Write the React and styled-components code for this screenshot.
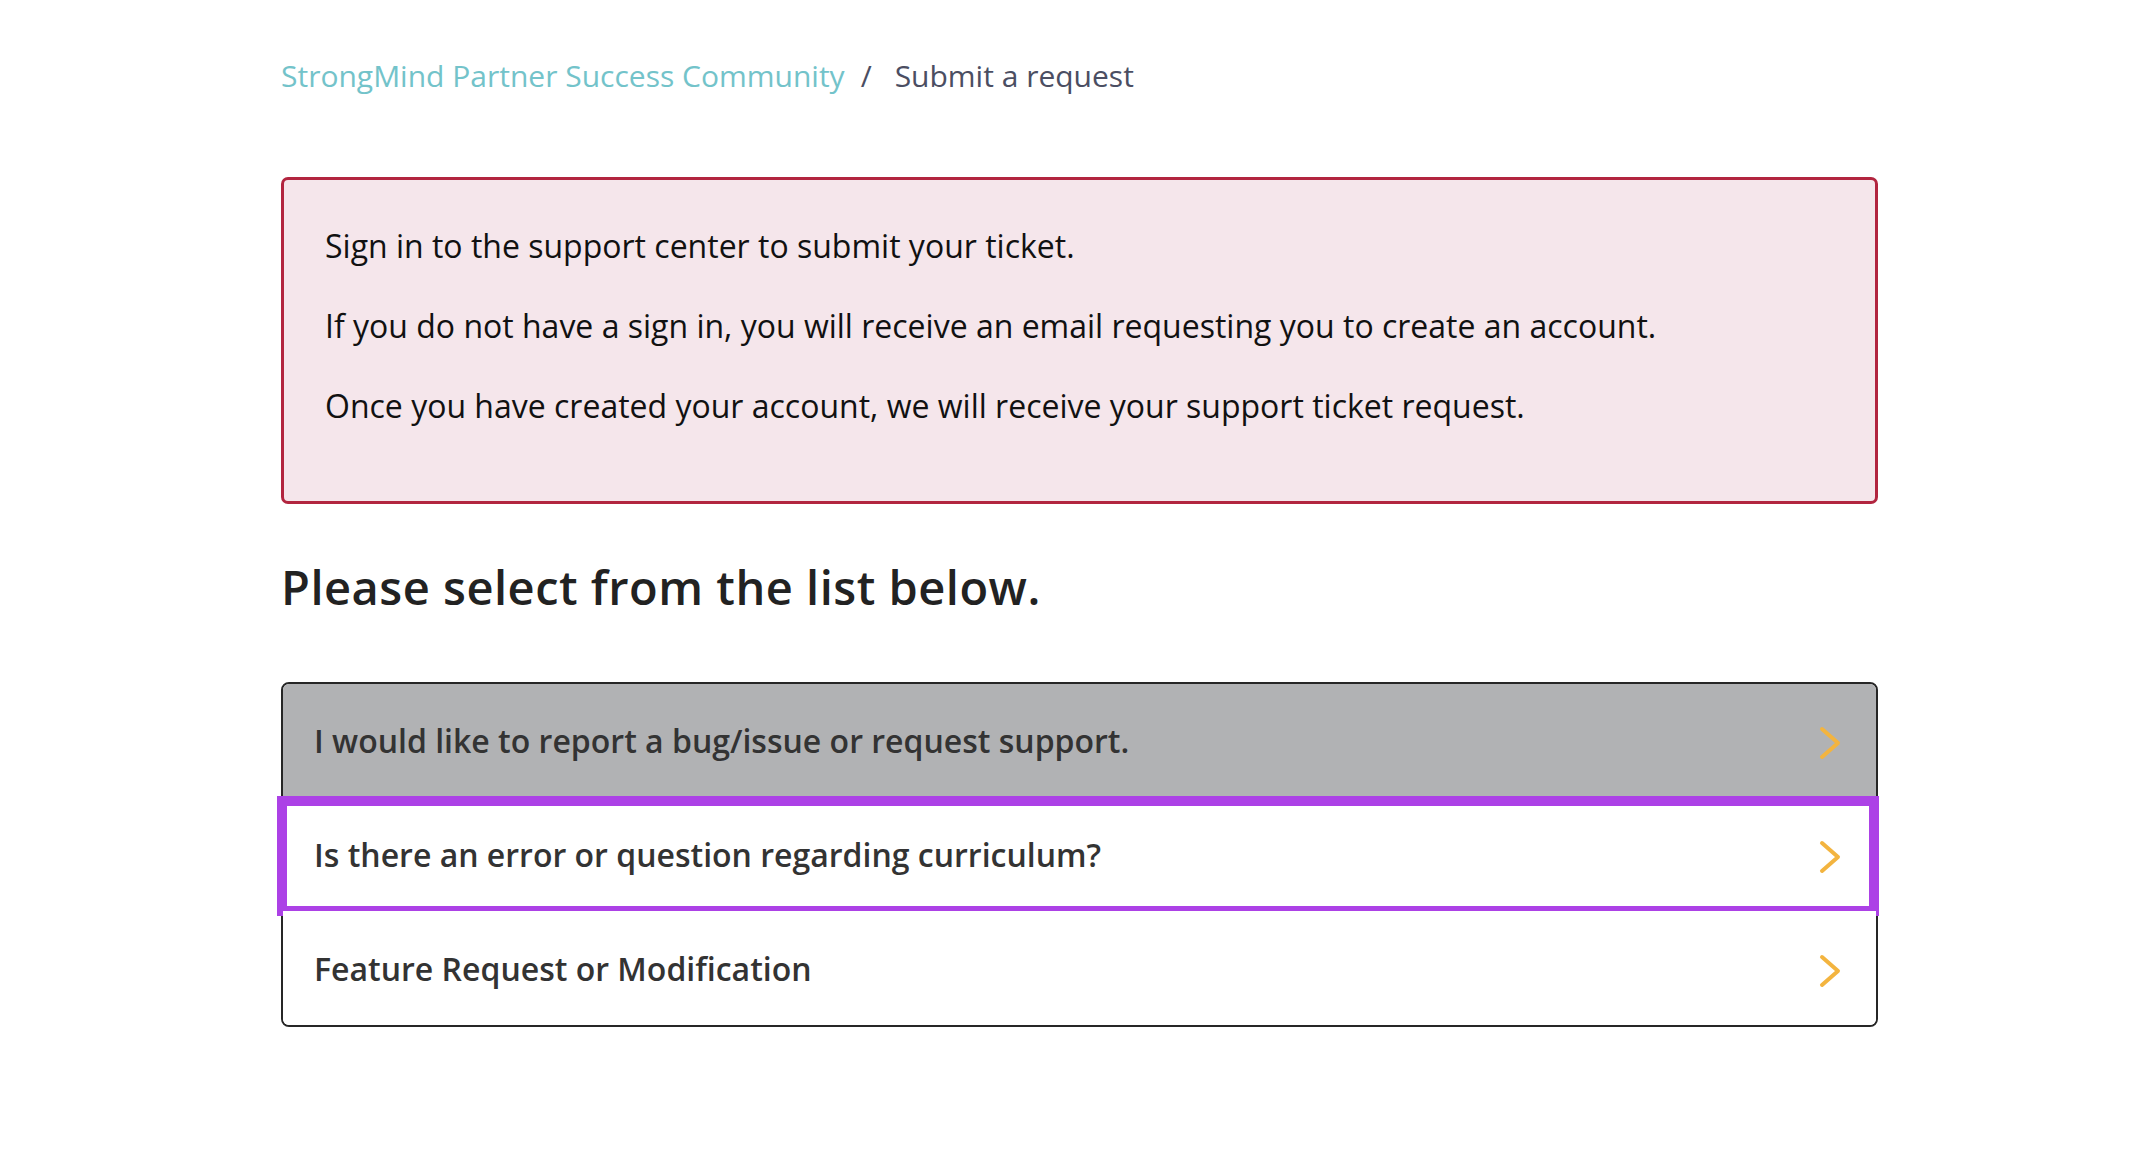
import React from "react";
import styled, { createGlobalStyle } from "styled-components";

const Global = createGlobalStyle`
  html, body { margin: 0; padding: 0; background: #ffffff; }
  body { font-family: "Open Sans", "Noto Sans", Arial, sans-serif; }
  * { box-sizing: border-box; }
`;

const Page = styled.main`
  width: 1597px;
  margin: 0 0 0 281px;
  padding-top: 55px;
  padding-bottom: 120px;
`;

const Breadcrumbs = styled.nav`
  display: flex;
  align-items: baseline;
  font-size: 30px;
  line-height: 41px;
  color: #4b4e62;
`;

const Crumb = styled.a`
  color: ${(p) => (p.$current ? "#4b4e62" : "#73c3ca")};
  text-decoration: none;
  cursor: pointer;
`;

const Sep = styled.span`
  margin: 0 23px 0 16px;
  color: #4b4e62;
`;

const Alert = styled.section`
  margin-top: 81px;
  background: #f5e6eb;
  border: 3px solid #b2253f;
  border-radius: 7px;
  padding: 42px 40px 39px 41px;
`;

const AlertText = styled.p`
  margin: 0 0 32px;
  font-size: 32px;
  line-height: 48px;
  color: #111111;
`;

const Heading = styled.h2`
  margin: 56px 0 0;
  font-size: 47px;
  line-height: 54px;
  font-weight: 600;
  letter-spacing: 0.5px;
  color: #222222;
`;

const List = styled.ul`
  list-style: none;
  margin: 68px 0 0;
  padding: 0;
  border: 2px solid #262626;
  border-radius: 8px;
`;

const Row = styled.li`
  position: relative;
  display: flex;
  align-items: center;
  justify-content: space-between;
  height: ${(p) => p.$h}px;
  padding: 0 35px 0 31px;
  background: ${(p) => (p.$hover ? "#b1b2b4" : "#ffffff")};
  border-radius: ${(p) => p.$radius};
  cursor: pointer;
`;

const RowLabel = styled.span`
  font-size: 32px;
  font-weight: 600;
  color: #333333;
`;

const ChevronBox = styled.span`
  display: flex;
  margin-top: 5px;
`;

const Highlight = styled.div`
  position: absolute;
  top: -1px;
  bottom: -5px;
  left: -6px;
  right: -3px;
  border: 10px solid #ac41e6;
  pointer-events: none;
`;

const Chevron = () => (
  <ChevronBox>
    <svg width="22" height="34" viewBox="0 0 22 34" fill="none">
      <polyline
        points="3,3 19,17 3,31"
        stroke="#f3b43f"
        strokeWidth="4"
        strokeLinecap="round"
        strokeLinejoin="round"
      />
    </svg>
  </ChevronBox>
);

const items = [
  { label: "I would like to report a bug/issue or request support.", hover: true, h: 113, radius: "6px 6px 0 0" },
  { label: "Is there an error or question regarding curriculum?", selected: true, h: 114, radius: "0" },
  { label: "Feature Request or Modification", h: 114, radius: "0 0 6px 6px" },
];

export default function App() {
  return (
    <>
      <Global />
      <Page>
        <Breadcrumbs>
          <Crumb>StrongMind Partner Success Community</Crumb>
          <Sep>/</Sep>
          <Crumb $current>Submit a request</Crumb>
        </Breadcrumbs>
        <Alert>
          <AlertText>Sign in to the support center to submit your ticket.</AlertText>
          <AlertText>If you do not have a sign in, you will receive an email requesting you to create an account.</AlertText>
          <AlertText>Once you have created your account, we will receive your support ticket request.</AlertText>
        </Alert>
        <Heading>Please select from the list below.</Heading>
        <List>
          {items.map((it) => (
            <Row key={it.label} $hover={it.hover} $h={it.h} $radius={it.radius}>
              <RowLabel>{it.label}</RowLabel>
              <Chevron />
              {it.selected && <Highlight />}
            </Row>
          ))}
        </List>
      </Page>
    </>
  );
}
